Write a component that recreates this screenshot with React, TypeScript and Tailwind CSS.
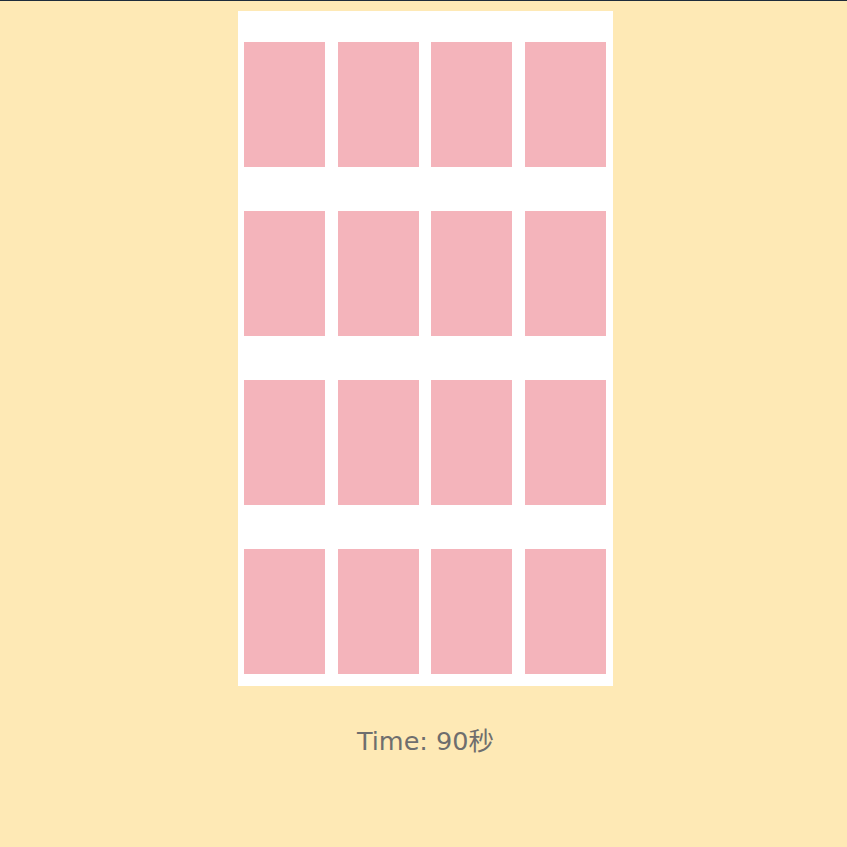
export default function App() {
  const cards = Array.from({ length: 16 });
  return (
    <div className="min-h-[847px] bg-[#fee9b5] border-t border-[#1e2b3a] flex flex-col items-center pl-[4px]" style={{ fontFamily: '"DejaVu Sans", "Noto Sans CJK SC", sans-serif' }}>
      <div className="mt-[10px] bg-white w-[375px] pt-[31px] pl-[6px] pr-[7px] pb-[12px]">
        <div className="grid grid-cols-4 gap-x-[12.5px] gap-y-[44px]">
          {cards.map((_, i) => (
            <div key={i} className="h-[125px] bg-[#f4b4bb]" />
          ))}
        </div>
      </div>
      <div className="mt-[36px] text-[25.5px] text-[#6e6e6e]">Time: 90秒</div>
    </div>
  );
}
